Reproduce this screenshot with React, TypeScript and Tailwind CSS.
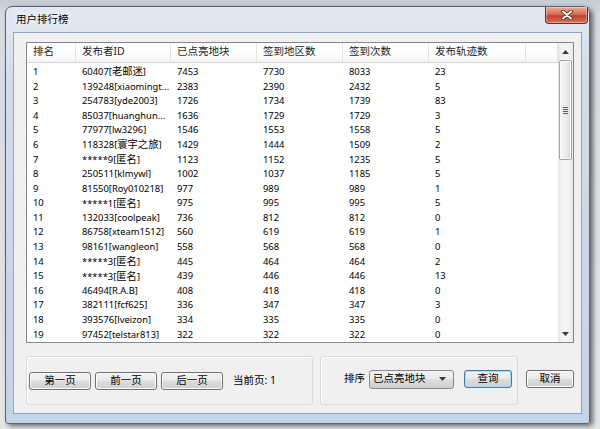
const FONT = '"Noto Sans", "Noto Sans CJK SC", sans-serif'

const widthClass = ['w-[49px]', 'w-[95px]', 'w-[86px]', 'w-[86px]', 'w-[86px]', 'w-[97px]']
const headers = ['排名', '发布者ID', '已点亮地块', '签到地区数', '签到次数', '发布轨迹数']

const rows: [string, string, string, string, string, string][] = [
  ['1', '60407[老邮迷]', '7453', '7730', '8033', '23'],
  ['2', '139248[xiaomingt...', '2383', '2390', '2432', '5'],
  ['3', '254783[yde2003]', '1726', '1734', '1739', '83'],
  ['4', '85037[huanghun...', '1636', '1729', '1729', '3'],
  ['5', '77977[lw3296]', '1546', '1553', '1558', '5'],
  ['6', '118328[寰宇之旅]', '1429', '1444', '1509', '2'],
  ['7', '*****9[匿名]', '1123', '1152', '1235', '5'],
  ['8', '250511[klmywl]', '1002', '1037', '1185', '5'],
  ['9', '81550[Roy010218]', '977', '989', '989', '1'],
  ['10', '*****1[匿名]', '975', '995', '995', '5'],
  ['11', '132033[coolpeak]', '736', '812', '812', '0'],
  ['12', '86758[xteam1512]', '560', '619', '619', '1'],
  ['13', '98161[wangleon]', '558', '568', '568', '0'],
  ['14', '*****3[匿名]', '445', '464', '464', '2'],
  ['15', '*****3[匿名]', '439', '446', '446', '13'],
  ['16', '46494[R.A.B]', '408', '418', '418', '0'],
  ['17', '382111[fcf625]', '336', '347', '347', '3'],
  ['18', '393576[lveizon]', '334', '335', '335', '0'],
  ['19', '97452[telstar813]', '322', '322', '322', '0'],
]

// CJK runs get a slightly larger size than the latin text, like the original UI font
function Mixed({ text }: { text: string }) {
  return (
    <>
      {text.split(/([\u4e00-\u9fff]+)/).map((p, i) =>
        /[\u4e00-\u9fff]/.test(p) ? (
          <span key={i} className="text-[10.3px]">
            {p}
          </span>
        ) : (
          p
        )
      )}
    </>
  )
}

function Btn({ label, w, isDefault }: { label: string; w: string; isDefault?: boolean }) {
  return (
    <div
      className={`${w} h-[18px] rounded-[3px] border flex items-center justify-center text-[10.5px] text-black bg-[linear-gradient(180deg,#f2f2f2_0%,#ebebeb_45%,#dddddd_50%,#cfcfcf_100%)] ${
        isDefault
          ? 'border-[#3c7fb1] shadow-[inset_0_0_0_1px_#a9d9f5]'
          : 'border-[#707070] shadow-[inset_0_0_0_1px_#fcfcfc]'
      }`}
    >
      {label}
    </div>
  )
}

function Triangle({ down }: { down?: boolean }) {
  return (
    <svg width="7" height="4" viewBox="0 0 7 4">
      <path d={down ? 'M0 0 L7 0 L3.5 4 Z' : 'M0 4 L7 4 L3.5 0 Z'} fill="#3a3a3a" />
    </svg>
  )
}

export default function App() {
  return (
    <div
      className="w-[600px] h-[429px] overflow-hidden bg-[linear-gradient(180deg,#c6ccd3_0%,#d6dbe1_4%,#e4e6e8_100%)]"
      style={{ fontFamily: FONT }}
    >
      <div className="pt-[6px] pl-[5px]">
        <div className="w-[585px] h-[418px] rounded-t-[7px] rounded-b-[3px] border border-[#56667a] bg-[linear-gradient(180deg,#e1e9f2_0%,#cfdcea_20%,#c3d4e6_100%)] shadow-[3px_2px_5px_rgba(0,0,0,0.55)] flex flex-col">
          {/* Title bar */}
          <div className="h-[25px] flex items-start justify-between">
            <div className="pl-[10px] h-full flex items-center text-[10.5px] text-black [text-shadow:0_0_5px_#fff,0_0_8px_#fff]">
              用户排行榜
            </div>
            <div className="mr-[1px] w-[43px] h-[17px] rounded-b-[4px] border border-t-0 border-[#6b2b20] bg-[linear-gradient(180deg,#e9a99a_0%,#d86e58_45%,#c2402b_55%,#d57260_100%)] shadow-[inset_0_0_0_1px_rgba(255,255,255,0.35)] flex items-center justify-center">
              <svg width="12" height="10" viewBox="0 0 12 10">
                <path d="M2 1.5 L10 8.5 M10 1.5 L2 8.5" stroke="#4a2018" strokeWidth="3.6" strokeLinecap="round" />
                <path d="M2 1.5 L10 8.5 M10 1.5 L2 8.5" stroke="#ffffff" strokeWidth="2" strokeLinecap="round" />
              </svg>
            </div>
          </div>

          {/* Client area */}
          <div className="mx-[7px] h-[382px] border border-[#8aa6c4] bg-[#f0f0f0] flex flex-col pl-[12px] pt-[9px]">
            {/* List view */}
            <div className="w-[548px] h-[301px] border border-[#828790] bg-white flex">
              <div className="flex-1 flex flex-col">
                <div className="h-[20px] flex border-b border-[#d5d5d5] bg-[linear-gradient(180deg,#ffffff_0%,#ffffff_50%,#f4f5f7_100%)] text-[10.5px] text-[#1e1e1e]">
                  {headers.map((h, i) => (
                    <div key={h} className={`${widthClass[i]} h-full pl-[6px] flex items-center border-r border-[#e2e4e8]`}>
                      {h}
                    </div>
                  ))}
                  <div className="flex-1 border-r border-[#e2e4e8]" />
                </div>
                <div className="pt-[2px] text-[9.4px] text-black">
                  {rows.map(r => (
                    <div key={r[0]} className="h-[14.6px] flex items-center">
                      {r.map((c, i) => (
                        <div key={i} className={`${widthClass[i]} pl-[6px] whitespace-nowrap`}>
                          <Mixed text={c} />
                        </div>
                      ))}
                    </div>
                  ))}
                </div>
              </div>
              {/* Scrollbar */}
              <div className="w-[15px] h-full flex flex-col bg-[linear-gradient(90deg,#e6e6e6_0%,#f4f4f4_25%,#f4f4f4_75%,#e8e8e8_100%)]">
                <div className="h-[17px] flex items-center justify-center">
                  <Triangle />
                </div>
                <div className="mx-[1px] h-[100px] rounded-[2px] border border-[#a3a3a3] bg-[linear-gradient(90deg,#f6f6f6_0%,#ececec_50%,#dcdcdc_100%)] shadow-[inset_0_0_0_1px_#fbfbfb] flex flex-col items-center justify-center gap-[1px]">
                  <div className="w-[5px] h-[1px] bg-[#5d5d5d]" />
                  <div className="w-[5px] h-[1px] bg-[#5d5d5d]" />
                  <div className="w-[5px] h-[1px] bg-[#5d5d5d]" />
                  <div className="w-[5px] h-[1px] bg-[#5d5d5d]" />
                </div>
                <div className="flex-1" />
                <div className="h-[17px] flex items-center justify-center">
                  <Triangle down />
                </div>
              </div>
            </div>

            {/* Bottom controls */}
            <div className="mt-[13px] h-[49px] flex">
              <div className="w-[287px] h-full rounded-[3px] border border-[#d5dadf] shadow-[inset_1px_1px_0_#fff] flex items-center gap-[4px] pl-[2px]">
                <Btn label="第一页" w="w-[62px]" />
                <Btn label="前一页" w="w-[62px]" />
                <Btn label="后一页" w="w-[62px]" />
                <span className="ml-[6px] text-[10.5px] text-black">当前页: 1</span>
              </div>
              <div className="ml-[7px] w-[198px] h-full rounded-[3px] border border-[#d5dadf] shadow-[inset_1px_1px_0_#fff] flex items-center pl-[23px] pb-[3px]">
                <span className="text-[10.5px] text-black">排序</span>
                <div className="ml-[4px] w-[85px] h-[19px] rounded-[3px] border border-[#8a8a8a] bg-[linear-gradient(180deg,#f2f2f2_0%,#ebebeb_45%,#dddddd_50%,#cfcfcf_100%)] flex items-center justify-between pl-[3px] pr-[7px] text-[10.5px] text-black">
                  <span>已点亮地块</span>
                  <Triangle down />
                </div>
                <div className="ml-[10px]">
                  <Btn label="查询" w="w-[48px]" isDefault />
                </div>
              </div>
              <div className="ml-[8px] h-full flex items-center pb-[3px]">
                <Btn label="取消" w="w-[48px]" />
              </div>
            </div>
          </div>
        </div>
      </div>
    </div>
  )
}
